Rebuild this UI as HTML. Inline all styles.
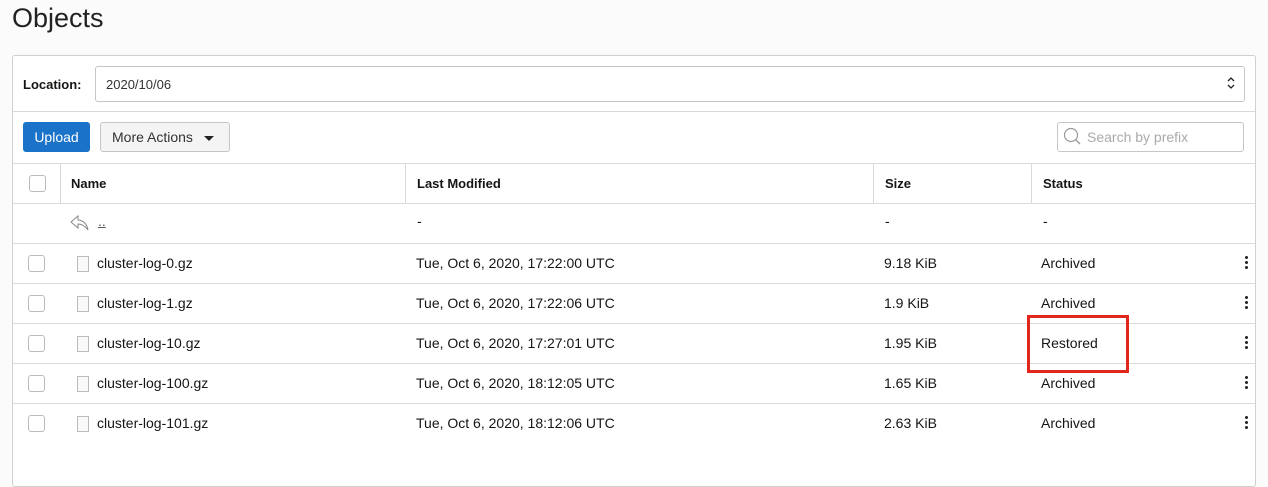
<!DOCTYPE html>
<html><head><style>
body{margin:0;width:1268px;height:440px;overflow:hidden;background:#fbfbfb;font-family:"Liberation Sans",sans-serif;color:#161513;position:relative}
h1{position:absolute;left:12px;top:3px;margin:0;font-weight:normal;font-size:27px;color:#222}
.panel{position:absolute;left:12px;top:55px;width:1242px;height:430px;border:1px solid #cfcfcf;border-radius:3px;background:#fff}
.abs{position:absolute}
.t{font-size:14px}
.cb{position:absolute;width:15px;height:15px;border:1px solid #bbb;border-radius:3px;background:#fff}
.line{position:absolute;left:0;width:1242px;height:1px;background:#d9d9d9}
.vl{position:absolute;width:1px;background:#d9d9d9;top:108px;height:40px}
.file{position:absolute;width:10px;height:14px;border:1px solid #bbb;background:#fafafa}
.dots{position:absolute;width:3px}
.dots i{display:block;width:3px;height:3px;background:#222;border-radius:50%;margin-bottom:2px}
</style></head><body>
<h1>Objects</h1>
<div class="panel">
<div class="abs t" style="left:10px;top:21px;font-weight:bold;font-size:13px">Location:</div>
<div class="abs" style="left:82px;top:10px;width:1148px;height:34px;border:1px solid #c6c6c6;border-radius:3px"></div>
<div class="abs t" style="left:93px;top:21px;font-size:13px;color:#333">2020/10/06</div>
<svg class="abs" style="left:1213px;top:19px" width="10" height="16"><path d="M2 6 L5 3 L8 6 M2 10 L5 13 L8 10" stroke="#222" stroke-width="1.3" fill="none"/></svg>
<div class="line" style="top:55px"></div>
<div class="abs" style="left:10px;top:66px;width:67px;height:30px;background:#1a73c9;border-radius:3px;color:#fff;font-size:14px;line-height:30px;text-align:center">Upload</div>
<div class="abs" style="left:87px;top:66px;width:128px;height:28px;background:#f4f4f4;border:1px solid #c6c6c6;border-radius:3px;font-size:14px;line-height:28px;color:#333"><span style="margin-left:11px">More Actions</span></div>
<svg class="abs" style="left:190px;top:79px" width="12" height="7"><path d="M1 1 L11 1 L6 6Z" fill="#222"/></svg>
<div class="abs" style="left:1044px;top:66px;width:185px;height:28px;border:1px solid #c6c6c6;border-radius:3px"></div>
<svg class="abs" style="left:1050px;top:71px" width="20" height="20"><circle cx="8" cy="8" r="6.5" stroke="#999" stroke-width="1.2" fill="none"/><path d="M12.5 12.5 L17 17" stroke="#999" stroke-width="1.3"/></svg>
<div class="abs" style="left:1074px;top:73px;font-size:14px;color:#aaa">Search by prefix</div>
<div class="line" style="top:107px"></div>
<div class="vl" style="left:47px"></div><div class="vl" style="left:392px"></div><div class="vl" style="left:860px"></div><div class="vl" style="left:1018px"></div>
<div class="cb" style="left:16px;top:119px"></div>
<div class="abs t" style="left:58px;top:120px;font-weight:bold;font-size:13px">Name</div>
<div class="abs t" style="left:404px;top:120px;font-weight:bold;font-size:13px">Last Modified</div>
<div class="abs t" style="left:872px;top:120px;font-weight:bold;font-size:13px">Size</div>
<div class="abs t" style="left:1030px;top:120px;font-weight:bold;font-size:13px">Status</div>
<div class="line" style="top:147px"></div>
<svg class="abs" style="left:57px;top:158px" width="20" height="18"><path d="M8 2 L1 8 L8 14 L8 10 C12 10 15 12 18 16 C17 10 13 6 8 6Z" stroke="#888" stroke-width="1" fill="none"/></svg>
<div class="abs t" style="left:85px;top:157px;color:#555;text-decoration:underline">..</div>
<div class="abs t" style="left:404px;top:157px">-</div>
<div class="abs t" style="left:872px;top:157px">-</div>
<div class="abs t" style="left:1030px;top:157px">-</div>
<div class="line" style="top:187px"></div>
</div>
<div id="rows"></div>
<script>
var d=[["cluster-log-0.gz","17:22:00","9.18 KiB","Archived"],["cluster-log-1.gz","17:22:06","1.9 KiB","Archived"],["cluster-log-10.gz","17:27:01","1.95 KiB","Restored"],["cluster-log-100.gz","18:12:05","1.65 KiB","Archived"],["cluster-log-101.gz","18:12:06","2.63 KiB","Archived"]];
var h="";d.forEach(function(r,i){var y=243+i*40;
h+='<div class="cb" style="left:28px;top:'+(y+12)+'px"></div><div class="file" style="left:77px;top:'+(y+13)+'px"></div>';
h+='<div class="abs t" style="left:97px;top:'+(y+12)+'px">'+r[0]+'</div><div class="abs t" style="left:416px;top:'+(y+12)+'px">Tue, Oct 6, 2020, '+r[1]+' UTC</div>';
h+='<div class="abs t" style="left:884px;top:'+(y+12)+'px">'+r[2]+'</div><div class="abs t" style="left:1041px;top:'+(y+12)+'px">'+r[3]+'</div>';
h+='<div class="dots" style="left:1245px;top:'+(y+13)+'px"><i></i><i></i><i></i></div>';
if(i<4)h+='<div class="abs" style="left:13px;top:'+(y+40)+'px;width:1242px;height:1px;background:#d9d9d9"></div>';});
h+='<div class="abs" style="left:1027px;top:315px;width:96px;height:52px;border:3px solid #e1261c"></div>';
document.getElementById("rows").innerHTML=h;
</script>
</body></html>
